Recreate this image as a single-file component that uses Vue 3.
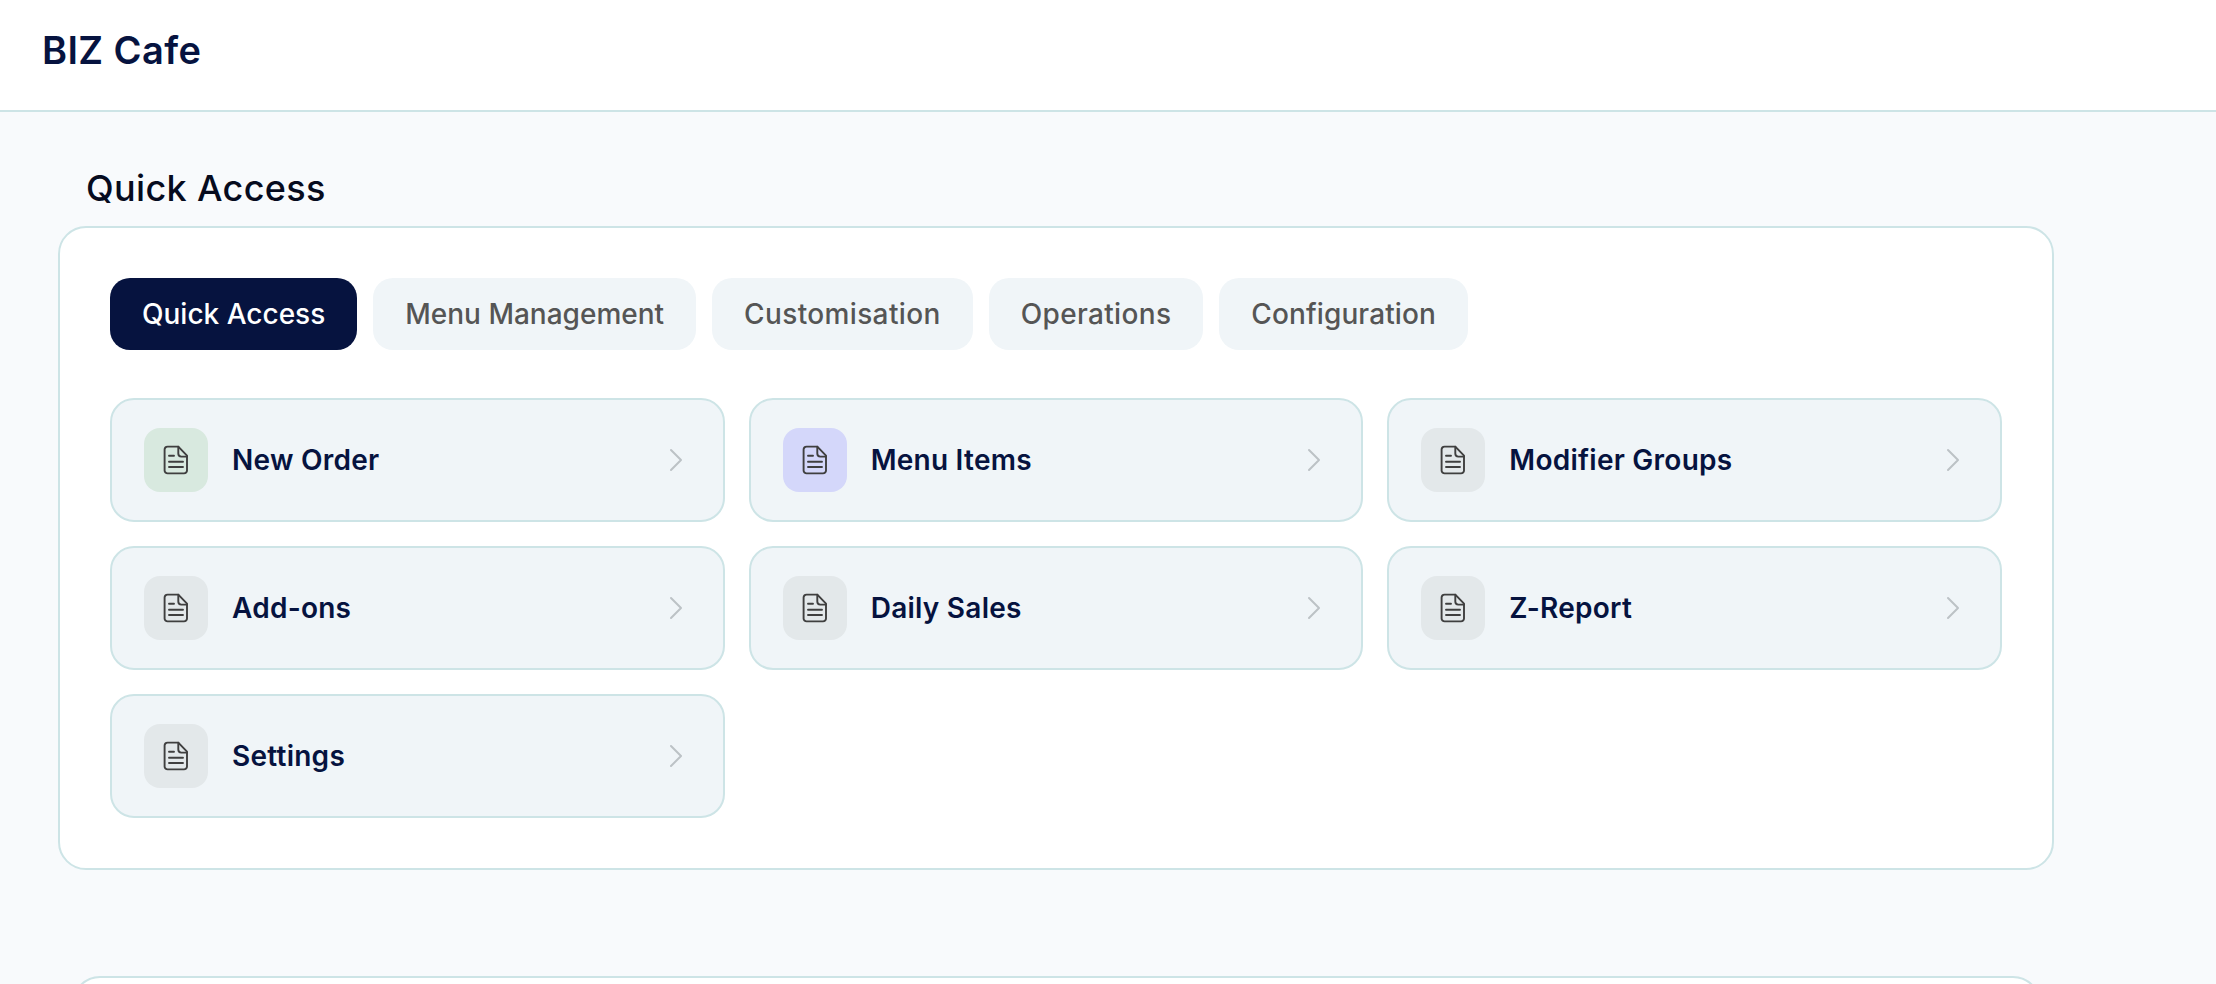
<script setup>
import { ref } from 'vue'

const tabs = [
  { label: 'Quick Access', spacing: 0 },
  { label: 'Menu Management', spacing: 0 },
  { label: 'Customisation', spacing: 0.36 },
  { label: 'Operations', spacing: 0.34 },
  { label: 'Configuration', spacing: 0.11 }
]
const activeTab = ref('Quick Access')

const items = [
  { label: 'New Order', tone: 'green' },
  { label: 'Menu Items', tone: 'blue' },
  { label: 'Modifier Groups', tone: 'grey' },
  { label: 'Add-ons', tone: 'grey' },
  { label: 'Daily Sales', tone: 'grey' },
  { label: 'Z-Report', tone: 'grey' },
  { label: 'Settings', tone: 'grey' }
]
</script>

<template>
  <div class="page">
    <header class="topbar">
      <h1 class="brand">BIZ Cafe</h1>
    </header>

    <main class="content">
      <h2 class="section-title">Quick Access</h2>

      <section class="panel">
        <div class="tabs">
          <button
            v-for="tab in tabs"
            :key="tab.label"
            class="tab"
            :class="{ active: tab.label === activeTab }"
            :style="{ letterSpacing: tab.spacing + 'px' }"
            @click="activeTab = tab.label"
          >
            {{ tab.label }}
          </button>
        </div>

        <div class="grid">
          <a v-for="item in items" :key="item.label" class="item" href="#">
            <span class="icon-box" :class="item.tone">
              <svg class="doc" viewBox="0 0 36 36" fill="none" stroke="currentColor" stroke-width="1.9" stroke-linecap="round" stroke-linejoin="round">
                <path d="M20.3 4.6H9.6a3 3 0 0 0-3 3v20.8a3 3 0 0 0 3 3h16.4a3 3 0 0 0 3-3V13.6z" />
                <path d="M20.3 4.6v7a3 3 0 0 0 3 3H29" />
                <path d="M11 13.7h5M11 19.7h14M11 25h14" />
              </svg>
            </span>
            <span class="label">{{ item.label }}</span>
            <svg class="chevron" viewBox="0 0 14 24" fill="none" stroke="currentColor" stroke-width="2" stroke-linecap="round" stroke-linejoin="round">
              <path d="M2 2l10 10L2 22" />
            </svg>
          </a>
        </div>
      </section>

      <section class="panel next"></section>
    </main>
  </div>
</template>

<style scoped>
.page {
  height: 984px;
  overflow: hidden;
  background: #f8fafc;
  font-family: "Inter", "Noto Sans", sans-serif;
}

.topbar {
  height: 110px;
  box-sizing: content-box;
  display: flex;
  align-items: center;
  padding-left: 42px;
  background: #fff;
  border-bottom: 2px solid #cde4e6;
}

.brand {
  margin: 0 0 10px;
  font-size: 38px;
  font-weight: 600;
  letter-spacing: 0.4px;
  color: #06133f;
}

.content {
  padding: 0 162px 0 58px;
}

.section-title {
  margin: 0;
  padding: 53px 0 0 28px;
  height: 61px;
  font-size: 36px;
  line-height: 46px;
  font-weight: 500;
  letter-spacing: 0.35px;
  color: #060b1e;
}

.panel {
  box-sizing: border-box;
  width: 1996px;
  padding: 50px;
  background: #fff;
  border: 2px solid #cde4e6;
  border-radius: 28px;
}

.panel.next {
  width: 1969px;
  height: 200px;
  margin: 106px 0 0 14px;
}

.tabs {
  display: flex;
  gap: 16px;
  margin-bottom: 48px;
}

.tab {
  height: 72px;
  padding: 0 32px;
  border: none;
  border-radius: 20px;
  background: #f0f5f8;
  color: #555;
  font-family: inherit;
  font-size: 28px;
  font-weight: 500;
}

.tab.active {
  background: #06133f;
  color: #fff;
}

.grid {
  display: grid;
  grid-template-columns: repeat(3, 1fr);
  gap: 24px;
}

.item {
  box-sizing: border-box;
  height: 124px;
  display: flex;
  align-items: center;
  gap: 24px;
  padding: 0 40px 0 32px;
  background: #f0f5f8;
  border: 2px solid #cde4e6;
  border-radius: 24px;
  text-decoration: none;
}

.icon-box {
  width: 64px;
  height: 64px;
  display: flex;
  align-items: center;
  justify-content: center;
  border-radius: 16px;
  color: #3f3f3f;
}

.icon-box.green { background: #d8e9df; }
.icon-box.blue { background: #d4d7fa; }
.icon-box.grey { background: #e3e8ea; }

.doc {
  width: 36px;
  height: 36px;
}

.label {
  flex: 1;
  font-size: 28px;
  font-weight: 600;
  letter-spacing: 0.25px;
  color: #06133f;
}

.chevron {
  width: 14px;
  height: 24px;
  color: #bcc2c6;
}
</style>

<style>
html, body {
  margin: 0;
  background: #f8fafc;
}
</style>
